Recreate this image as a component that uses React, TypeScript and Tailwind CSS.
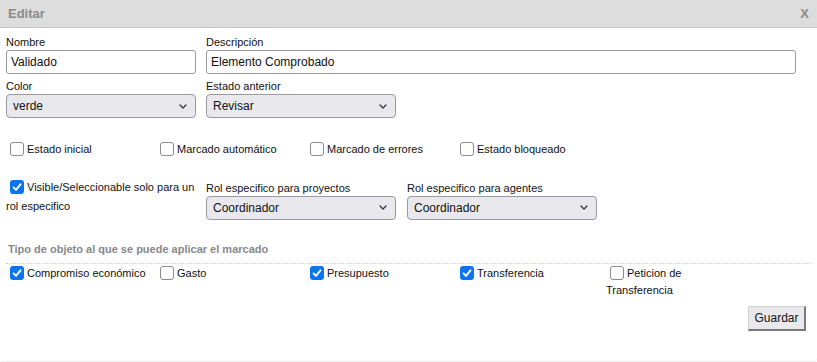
const sans = "font-['Liberation_Sans',Arial,sans-serif]";

function Box({ checked }: { checked?: boolean }) {
  if (checked) {
    return (
      <span className="mr-[3px] ml-[4px] inline-flex h-[14px] w-[14px] shrink-0 items-center justify-center rounded-[3px] bg-[#0b74f0] align-middle">
        <svg viewBox="0 0 14 14" className="h-[14px] w-[14px]" aria-hidden>
          <path d="M3.6 7.4 6 9.8 10.5 4.3" fill="none" stroke="white" strokeWidth="1.9" strokeLinecap="round" strokeLinejoin="round" />
        </svg>
      </span>
    );
  }
  return (
    <span className="mr-[3px] ml-[4px] inline-block h-[14px] w-[14px] shrink-0 rounded-[3px] border border-[#8c8c8c] bg-white align-middle" />
  );
}

function Field({ label, value, width }: { label: string; value: string; width: string }) {
  return (
    <div className={width}>
      <div className="text-[11px] leading-[14px] text-[#111]">{label}</div>
      <div className="mt-[1px] flex h-[24px] items-center rounded-[3px] border border-[#9a9a9a] bg-white px-[4px] text-[12px] text-[#111]">
        {value}
      </div>
    </div>
  );
}

function Select({ label, value }: { label: string; value: string }) {
  return (
    <div className="w-[190px]">
      <div className="text-[11px] leading-[14px] text-[#111]">{label}</div>
      <div className="mt-[1px] flex h-[24px] items-center justify-between rounded-[4px] border border-[#9a9aa4] bg-[#e9e9ed] pr-[8px] pl-[6px] text-[12px] text-[#111]">
        <span>{value}</span>
        <svg viewBox="0 0 8 5" className="h-[5px] w-[8px]" aria-hidden>
          <path d="M1 1 4 4 7 1" fill="none" stroke="#333" strokeWidth="1.3" strokeLinecap="round" strokeLinejoin="round" />
        </svg>
      </div>
    </div>
  );
}

function Check({ label, checked }: { label: string; checked?: boolean }) {
  return (
    <div className="flex items-center text-[11px] text-[#111]">
      <Box checked={checked} />
      <span>{label}</span>
    </div>
  );
}

export default function App() {
  return (
    <div className={`${sans} h-[362px] w-[817px] overflow-hidden rounded-b-[4px] border-b border-[#ececec] bg-white`}>
      <div className="flex h-[28px] items-center justify-between border-b border-[#c6c6c6] bg-[#dddddd] pr-[8px] pl-[8px]">
        <span className="text-[13px] font-bold text-[#8a8a8a]">Editar</span>
        <span className="text-[13px] font-bold text-[#8a8a8a]">X</span>
      </div>

      <div className="px-[6px] pt-[7px]">
        <div className="flex gap-[10px]">
          <Field label="Nombre" value="Validado" width="w-[190px]" />
          <Field label="Descripción" value="Elemento Comprobado" width="w-[590px]" />
        </div>

        <div className="mt-[5px] flex gap-[10px]">
          <Select label="Color" value="verde" />
          <Select label="Estado anterior" value="Revisar" />
        </div>

        <div className="mt-[23px] grid grid-cols-[150px_150px_150px_150px]">
          <Check label="Estado inicial" />
          <Check label="Marcado automático" />
          <Check label="Marcado de errores" />
          <Check label="Estado bloqueado" />
        </div>

        <div className="mt-[23px] flex gap-[6px]">
          <div className="-mt-[4px] w-[194px] text-[11px] leading-[19px] text-[#111]">
            <Box checked />
            <span className="align-middle">Visible/Seleccionable solo para un rol especifico</span>
          </div>
          <div className="flex gap-[11px]">
            <Select label="Rol especifico para proyectos" value="Coordinador" />
            <Select label="Rol especifico para agentes" value="Coordinador" />
          </div>
        </div>

        <div className="mt-[22px] px-[2px] text-[11px] leading-[14px] font-bold text-[#888]">
          Tipo de objeto al que se puede aplicar el marcado
        </div>
        <div className="mt-[7px] mr-[1px] border-t border-dotted border-[#c8c8c8]" />

        <div className="grid grid-cols-[150px_150px_150px_150px_150px] text-[11px] leading-[17px] text-[#111]">
          <div>
            <Box checked />
            <span className="align-middle">Compromiso económico</span>
          </div>
          <div>
            <Box />
            <span className="align-middle">Gasto</span>
          </div>
          <div>
            <Box checked />
            <span className="align-middle">Presupuesto</span>
          </div>
          <div>
            <Box checked />
            <span className="align-middle">Transferencia</span>
          </div>
          <div className="w-[90px]">
            <Box />
            <span className="align-middle">Peticion de Transferencia</span>
          </div>
        </div>

        <div className="mt-[7px] flex justify-end pr-[5px]">
          <button
            type="button"
            className="h-[25px] w-[58px] border border-r-2 border-b-2 border-[#7a7a7a] border-t-[#d0d0d0] border-l-[#d0d0d0] bg-[#e9e9ed] text-[12px] text-[#111]"
          >
            Guardar
          </button>
        </div>
      </div>
    </div>
  );
}
